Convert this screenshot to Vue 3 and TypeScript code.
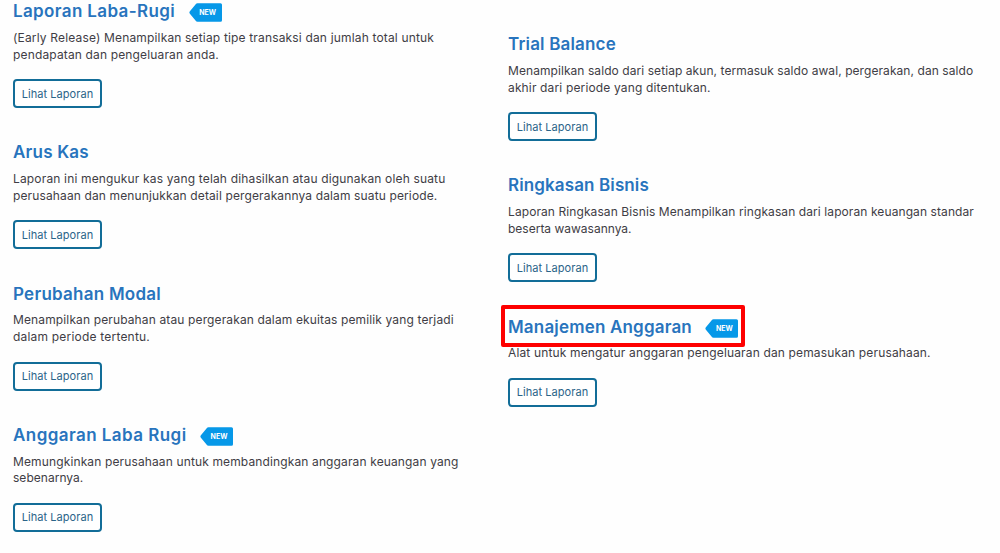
<template>
  <div class="report-list">
    <div v-for="(column, index) in columns" :key="index" class="report-column">
      <section v-for="report in column" :key="report.title" class="report">
        <h3 class="report-title">
          <span :style="{ letterSpacing: `${report.spacing}px` }">{{ report.title }}</span>
          <span v-if="report.isNew" class="badge">
            <svg class="badge-shape" viewBox="0 0 33 19">
              <path d="M8.5 0.3H31.5Q33 0.3 33 1.8V17.2Q33 18.7 31.5 18.7H8.5Q7.4 18.7 6.7 17.8L0.7 10.5Q0 9.5 0.7 8.5L6.7 1.2Q7.4 0.3 8.5 0.3Z" fill="#0698e8" />
            </svg>
            <span class="badge-text">NEW</span>
          </span>
          <span v-if="report.highlighted" class="highlight"></span>
        </h3>
        <p class="report-description">
          <span
            v-for="line in report.lines"
            :key="line.text"
            class="line"
            :style="{ letterSpacing: `${line.spacing}px` }"
          >{{ line.text }}</span>
        </p>
        <button type="button" class="report-button">Lihat Laporan</button>
      </section>
    </div>
  </div>
</template>

<script setup lang="ts">
interface Line {
  text: string
  spacing: number
}

interface Report {
  title: string
  spacing: number
  lines: Line[]
  isNew?: boolean
  highlighted?: boolean
}

const columns: Report[][] = [
  [
    {
      title: 'Laporan Laba-Rugi',
      spacing: 0.37,
      isNew: true,
      lines: [
        { text: '(Early Release) Menampilkan setiap tipe transaksi dan jumlah total untuk', spacing: 0.165 },
        { text: 'pendapatan dan pengeluaran anda.', spacing: 0.15 }
      ]
    },
    {
      title: 'Arus Kas',
      spacing: 0.2,
      lines: [
        { text: 'Laporan ini mengukur kas yang telah dihasilkan atau digunakan oleh suatu', spacing: 0.16 },
        { text: 'perusahaan dan menunjukkan detail pergerakannya dalam suatu periode.', spacing: 0.13 }
      ]
    },
    {
      title: 'Perubahan Modal',
      spacing: 0.25,
      lines: [
        { text: 'Menampilkan perubahan atau pergerakan dalam ekuitas pemilik yang terjadi', spacing: 0.13 },
        { text: 'dalam periode tertentu.', spacing: 0.2 }
      ]
    },
    {
      title: 'Anggaran Laba Rugi',
      spacing: 0.44,
      isNew: true,
      lines: [
        { text: 'Memungkinkan perusahaan untuk membandingkan anggaran keuangan yang', spacing: 0.13 },
        { text: 'sebenarnya.', spacing: 0.03 }
      ]
    }
  ],
  [
    {
      title: 'Trial Balance',
      spacing: 0.17,
      lines: [
        { text: 'Menampilkan saldo dari setiap akun, termasuk saldo awal, pergerakan, dan saldo', spacing: 0.07 },
        { text: 'akhir dari periode yang ditentukan.', spacing: 0.15 }
      ]
    },
    {
      title: 'Ringkasan Bisnis',
      spacing: 0.12,
      lines: [
        { text: 'Laporan Ringkasan Bisnis Menampilkan ringkasan dari laporan keuangan standar', spacing: 0.09 },
        { text: 'beserta wawasannya.', spacing: 0 }
      ]
    },
    {
      title: 'Manajemen Anggaran',
      spacing: 0.18,
      isNew: true,
      highlighted: true,
      lines: [
        { text: 'Alat untuk mengatur anggaran pengeluaran dan pemasukan perusahaan.', spacing: 0.15 }
      ]
    }
  ]
]
</script>

<style>
body {
  margin: 0;
  background: #fefefe;
  overflow: hidden;
}
</style>

<style scoped>
.report-list {
  display: grid;
  grid-template-columns: 495px 1fr;
  height: 553px;
  padding-left: 13px;
  box-sizing: border-box;
  overflow: hidden;
  font-family: Inter, "Liberation Sans", sans-serif;
}

.report-column {
  display: flex;
  flex-direction: column;
  gap: 33.3px;
}

.report-column:nth-child(2) {
  padding-top: 33px;
}

.report-title {
  position: relative;
  display: flex;
  align-items: center;
  gap: 13.5px;
  width: fit-content;
  height: 23px;
  margin: 0;
  color: #2874bd;
  font-size: 17px;
  font-weight: 600;
  line-height: 23px;
  white-space: nowrap;
}

.badge {
  position: relative;
  width: 33px;
  height: 19px;
  margin-top: 2px;
}

.badge-shape {
  display: block;
  width: 33px;
  height: 19px;
}

.badge-text {
  position: absolute;
  inset: 0 0 0 5px;
  color: #ffffff;
  font-size: 7px;
  font-weight: 700;
  line-height: 19px;
  text-align: center;
}

.highlight {
  position: absolute;
  top: -11px;
  left: -7px;
  right: -7px;
  height: 42px;
  border: 4px solid #fe0000;
  border-radius: 2px;
  box-sizing: border-box;
}

.report-description {
  margin: 6.8px 0 15.8px;
  color: #3f3d45;
  font-size: 12px;
  line-height: 16.7px;
}

.line {
  display: block;
  width: fit-content;
  white-space: nowrap;
}

.report-button {
  display: block;
  width: 89px;
  height: 29px;
  padding: 0;
  border: 2px solid #126d98;
  border-radius: 4px;
  background: #ffffff;
  color: #2b6489;
  font-family: inherit;
  font-size: 11px;
  letter-spacing: 0.05px;
  line-height: 24px;
  text-align: center;
}
</style>
